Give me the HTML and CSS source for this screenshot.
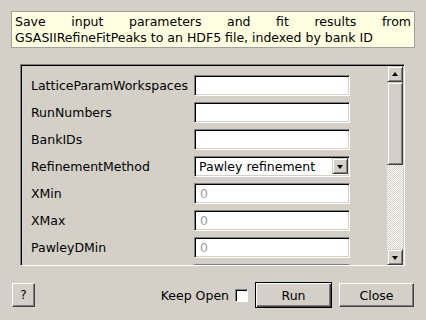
FILE: index.html
```html
<!DOCTYPE html>
<html lang="en">
<head>
    <meta charset="UTF-8">
    <title>Save GSASII fit results</title>
    <link rel="stylesheet" href="styles.css">
</head>
<body>
    <div class="dialog">
        <div class="desc">Save input parameters and fit results from GSASIIRefineFitPeaks to an HDF5 file, indexed by bank ID</div>

        <div class="panel">
            <div class="rows">
                <div class="row">
                    <span class="label">LatticeParamWorkspaces</span>
                    <div class="field"></div>
                </div>
                <div class="row">
                    <span class="label">RunNumbers</span>
                    <div class="field"></div>
                </div>
                <div class="row">
                    <span class="label">BankIDs</span>
                    <div class="field"></div>
                </div>
                <div class="row">
                    <span class="label">RefinementMethod</span>
                    <div class="field combo">
                        <span class="combo-text">Pawley refinement</span>
                        <span class="arrow-btn"><span class="tri down"></span></span>
                    </div>
                </div>
                <div class="row">
                    <span class="label">XMin</span>
                    <div class="field hint">0</div>
                </div>
                <div class="row">
                    <span class="label">XMax</span>
                    <div class="field hint">0</div>
                </div>
                <div class="row">
                    <span class="label">PawleyDMin</span>
                    <div class="field hint">0</div>
                </div>
                <!-- next row is scrolled out, only the top of its box shows -->
                <div class="row">
                    <span class="label"></span>
                    <div class="field"></div>
                </div>
            </div>
            <div class="scrollbar">
                <span class="arrow-btn sb-btn"><span class="tri up"></span></span>
                <span class="thumb"></span>
                <span class="track"></span>
                <span class="arrow-btn sb-btn"><span class="tri down"></span></span>
            </div>
        </div>

        <div class="footer">
            <button class="btn help">?</button>
            <div class="spacer"></div>
            <label class="keep">Keep Open <span class="check"></span></label>
            <button class="btn run">Run</button>
            <button class="btn close">Close</button>
        </div>
    </div>
</body>
</html>
```

FILE: styles.css
```css
*{
    box-sizing: border-box;
    margin: 0;
    padding: 0;
}
body{
    background-color: #d4d0c8;
    font-family: "DejaVu Sans", sans-serif;
    font-size: 12.5px;
    color: #000;
}
.dialog{
    width: 426px;
    height: 320px;
    padding: 11px 0 0 0;
}
.desc{
    margin-left: 11px;
    width: 404px;
    height: 37px;
    background-color: #ffffe1;
    border: 1px solid #a0a0a0;
    padding: 2px 3px 0 3px;
    line-height: 16px;
    text-align: justify;
}
.panel{
    margin: 16px 0 0 20px;
    width: 385px;
    height: 202px;
    border-top: 1px solid #808080;
    border-left: 1px solid #808080;
    border-right: 1px solid #fff;
    border-bottom: 1px solid #fff;
    box-shadow: inset 1px 1px 0 #000, inset -1px -1px 0 #d4d0c8;
    display: flex;
    overflow: hidden;
}
.rows{
    flex: 1;
    padding: 10px 0 0 10px;
    display: flex;
    flex-direction: column;
    gap: 7px;
}
.row{
    display: flex;
    align-items: center;
    height: 20px;
    flex-shrink: 0;
}
.label{
    width: 163px;
}
.field{
    width: 156px;
    height: 21px;
    background-color: #fff;
    border-top: 1px solid #808080;
    border-left: 1px solid #808080;
    border-right: 1px solid #fff;
    border-bottom: 1px solid #fff;
    box-shadow: inset 1px 1px 0 #000, inset -1px -1px 0 #d4d0c8;
    padding: 1px 0 0 5px;
    line-height: 17px;
}
.hint{
    color: #a0a0a0;
}
.combo{
    display: flex;
    align-items: center;
    padding: 2px 1px 2px 4px;
}
.combo-text{
    flex: 1;
}
.arrow-btn{
    width: 16px;
    height: 16px;
    background-color: #d4d0c8;
    border-top: 1px solid #d4d0c8;
    border-left: 1px solid #d4d0c8;
    border-right: 1px solid #404040;
    border-bottom: 1px solid #404040;
    box-shadow: inset 1px 1px 0 #fff, inset -1px -1px 0 #808080;
    display: flex;
    align-items: center;
    justify-content: center;
}
.tri{
    width: 0;
    height: 0;
    border-left: 3.5px solid transparent;
    border-right: 3.5px solid transparent;
}
.tri.down{
    border-top: 4px solid #000;
    margin-top: 1px;
}
.tri.up{
    border-bottom: 4px solid #000;
    margin-bottom: 1px;
}
.scrollbar{
    width: 16px;
    margin: 1px 1px 0 0;
    display: flex;
    flex-direction: column;
}
.sb-btn{
    flex-shrink: 0;
}
.thumb{
    height: 83px;
    background-color: #d4d0c8;
    border-top: 1px solid #d4d0c8;
    border-left: 1px solid #d4d0c8;
    border-right: 1px solid #404040;
    border-bottom: 1px solid #404040;
    box-shadow: inset 1px 1px 0 #fff, inset -1px -1px 0 #808080;
}
.track{
    flex: 1;
    background: repeating-conic-gradient(#fff 0 25%, #d4d0c8 0 50%) 0 0 / 2px 2px;
}
.footer{
    display: flex;
    align-items: center;
    margin-top: 16px;
    padding: 0 12px 0 12px;
    height: 26px;
}
.spacer{
    flex: 1;
}
.btn{
    font-family: "DejaVu Sans", sans-serif;
    font-size: 12.5px;
    color: #000;
    background-color: #d4d0c8;
    height: 24px;
    border-top: 1px solid #fff;
    border-left: 1px solid #fff;
    border-right: 1px solid #404040;
    border-bottom: 1px solid #404040;
    box-shadow: inset -1px -1px 0 #808080;
}
.help{
    width: 23px;
    font-size: 12px;
}
.keep{
    display: flex;
    align-items: center;
    gap: 6px;
    margin-right: 7px;
}
.check{
    width: 13px;
    height: 13px;
    background-color: #fff;
    border-top: 1px solid #808080;
    border-left: 1px solid #808080;
    border-right: 1px solid #fff;
    border-bottom: 1px solid #fff;
    box-shadow: inset 1px 1px 0 #000;
}
.run{
    width: 77px;
    height: 26px;
    border: 1px solid #000;
    box-shadow: inset 1px 1px 0 #fff, inset -1px -1px 0 #404040, inset -2px -2px 0 #808080;
    margin-right: 7px;
}
.close{
    width: 75px;
}
```
